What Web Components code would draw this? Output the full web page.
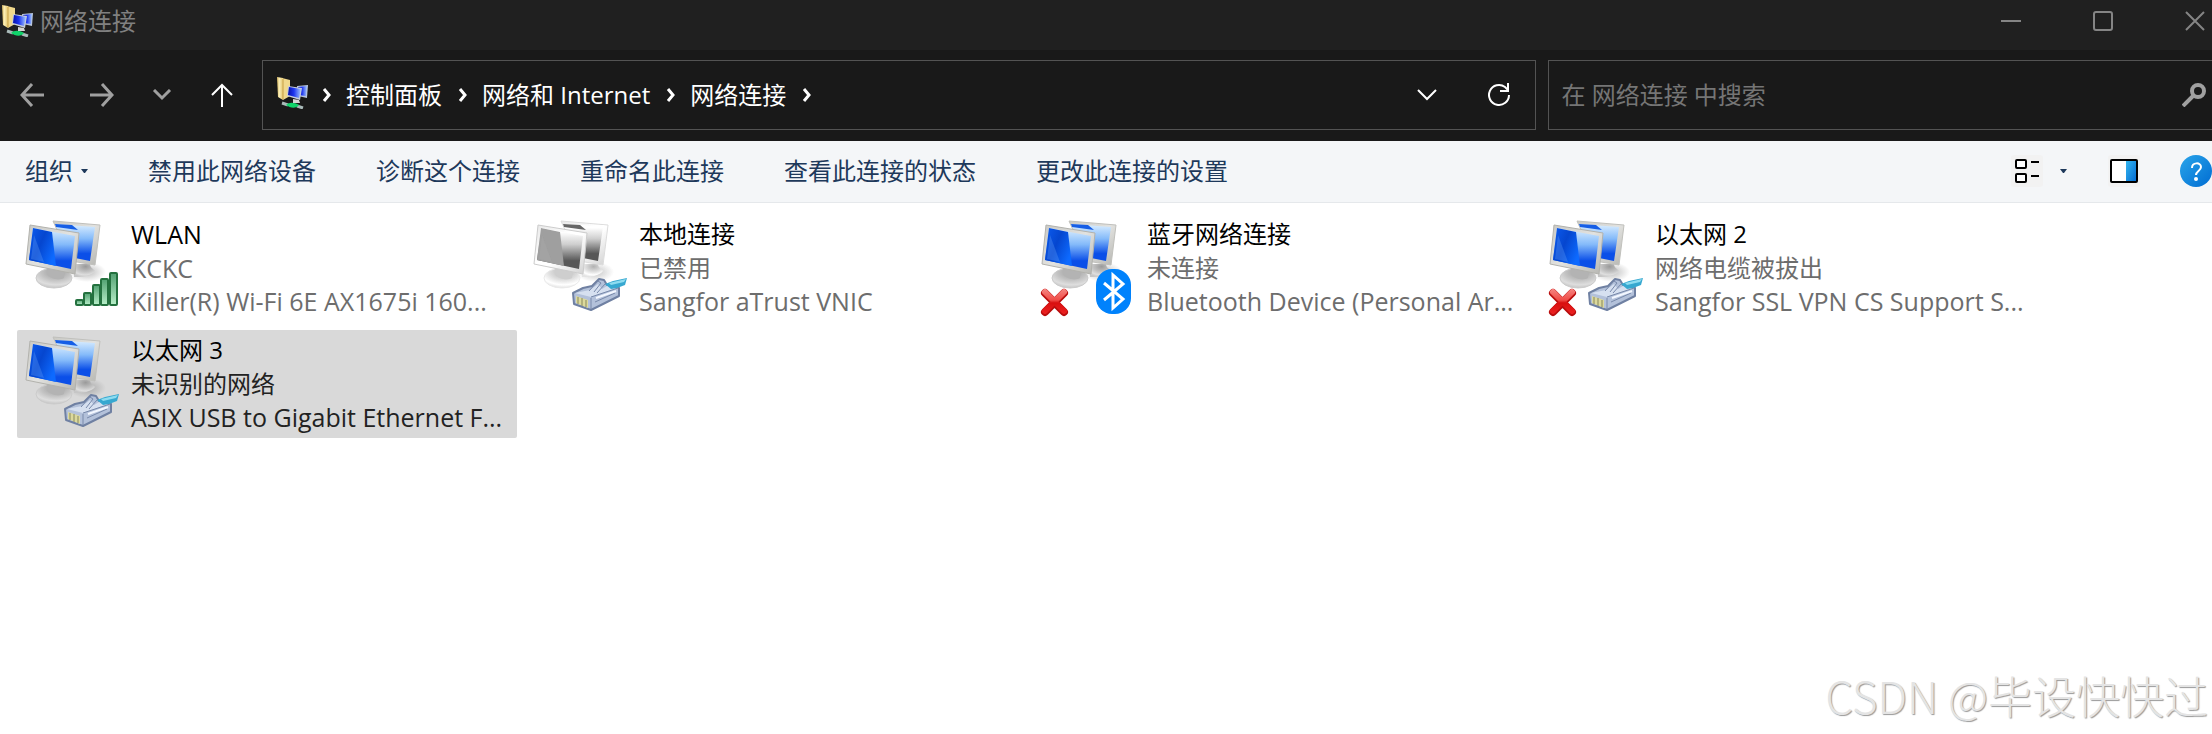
<!DOCTYPE html>
<html lang="zh-CN">
<head>
<meta charset="utf-8">
<title>网络连接</title>
<style>
  html, body { margin: 0; height: 100%; }
  body { background: #fff; font-family: "Open Sans", "Noto Sans CJK SC", sans-serif; font-size: 24px; line-height: 34px; overflow: hidden; }
</style>
</head>
<body>
<network-window></network-window>
<script>
const define = (name, html, setup) => customElements.define(name, class extends HTMLElement {
  connectedCallback() {
    if (this.shadowRoot) return;
    const t = document.createElement('template');
    t.innerHTML = html;
    this.attachShadow({ mode: 'open' }).append(t.content.cloneNode(true));
    if (setup) setup(this, this.shadowRoot);
  }
});

const reset = `
  button { all: unset; box-sizing: border-box; display: flex; align-items: center; justify-content: center; cursor: pointer; }
  a { color: inherit; text-decoration: none; }
  svg { display: block; flex: none; }
`;

define('folder-icon', `
<style>:host { display: block; flex: none; width: 32px; height: 32px; } svg { display: block; }</style>
<svg width="32" height="32" viewBox="0 0 32 32" aria-hidden="true">
  <defs>
    <linearGradient id="f"><stop offset="0" stop-color="#d9b960"/><stop offset=".4" stop-color="#fbeeb6"/><stop offset="1" stop-color="#e3c56c"/></linearGradient>
    <linearGradient id="s"><stop offset="0" stop-color="#0712a8"/><stop offset=".45" stop-color="#1d35f0"/><stop offset="1" stop-color="#a4c8ff"/></linearGradient>
  </defs>
  <path d="M0 0l6 1v22l-5-3z" fill="url(#f)"/>
  <path d="M5 1l8 2v16l-7 4z" fill="#f1d98c"/>
  <path d="M6 2v20" stroke="#c79f45" stroke-width="1"/>
  <path d="M20 9l11-1-1 13-9-2z" fill="#b9c6dc"/>
  <path d="M21 10l9-1-1 10-8-1z" fill="url(#s)"/>
  <path d="M11 9l14 2-2 12-13-4z" fill="#c7cedb"/>
  <path d="M12 10l12 2-2 9-11-3z" fill="url(#s)"/>
  <path d="M16 22l6 1 1 3h-7z" fill="#d5d5d5"/>
  <path d="M5 26l6 2M20 29l6 2" stroke="#a9bab9" stroke-width="3"/>
  <path d="M9 28c3-3 8-3 13 0-3 4-9 3-13 0z" fill="#10d36a"/>
</svg>`);

define('title-bar', `
<style>${reset}
  :host { display: flex; align-items: center; height: 50px; padding: 0 0 8px 2px; box-sizing: border-box; background: #202020; color: #808080; }
  h1 { margin: 0 auto 0 6px; font-size: 24px; font-weight: 400; }
  div { display: flex; gap: 72px; margin-right: 7px; }
  button { width: 20px; height: 42px; }
</style>
<folder-icon></folder-icon><h1>网络连接</h1>
<div>
  <button aria-label="最小化"><svg width="20" height="20" fill="none" stroke="#858585" stroke-width="2"><path d="M0 10h20"/></svg></button>
  <button aria-label="最大化"><svg width="20" height="20" fill="none" stroke="#858585" stroke-width="2"><rect x="1" y="1" width="18" height="18" rx="2"/></svg></button>
  <button aria-label="关闭"><svg width="20" height="20" fill="none" stroke="#858585" stroke-width="2"><path d="M1 1l18 18M19 1L1 19"/></svg></button>
</div>`);

const sep = '<svg width="10" height="14" fill="none" stroke="#fff" stroke-width="3" aria-hidden="true"><path d="M2 1l5 6-5 6"/></svg>';
define('nav-bar', `
<style>${reset}
  :host { display: flex; align-items: center; height: 91px; box-sizing: border-box; padding: 10px 0 11px; background: #191919; color: #fff; }
  .history { display: flex; width: 262px; flex: none; box-sizing: border-box; padding-left: 20px; align-items: center; }
  .history button { height: 48px; }
  .history button:nth-child(1) { width: 24px; margin-right: 46px; }
  .history button:nth-child(2) { width: 24px; margin-right: 38px; }
  .history button:nth-child(3) { width: 20px; margin-right: 38px; }
  .history button:nth-child(4) { width: 24px; }
  nav, form { display: flex; align-items: center; height: 70px; box-sizing: border-box; border: 1px solid #535353; margin: 0; }
  nav { flex: 1; padding: 0 24px 0 14px; }
  folder-icon { margin: 0 13px 5px 0; }
  a { margin: 0 16px 0 14px; }
  .grow { flex: 1; }
  nav button { width: 24px; height: 48px; }
  nav button:last-child { margin-left: 48px; }
  form { width: 30%; flex: none; margin-left: 12px; border-right: 0; padding: 0 6px 0 12px; }
  input { all: unset; flex: 1; font: inherit; color: #fff; }
  input::placeholder { color: #757575; opacity: 1; }
</style>
<div class="history">
  <button aria-label="后退"><svg width="24" height="24" fill="none" stroke="#a0a0a0" stroke-width="3"><path d="M24 12H2M12 1L2 12l10 11"/></svg></button>
  <button aria-label="前进"><svg width="24" height="24" fill="none" stroke="#a0a0a0" stroke-width="3"><path d="M0 12h22M12 1l10 11-10 11"/></svg></button>
  <button aria-label="最近的位置"><svg width="20" height="12" fill="none" stroke="#a0a0a0" stroke-width="3"><path d="M2 1l8 8 8-8"/></svg></button>
  <button aria-label="上移"><svg width="24" height="24" fill="none" stroke="#fff" stroke-width="2"><path d="M12 24V2M2 12L12 2l10 10"/></svg></button>
</div>
<nav aria-label="地址">
  <folder-icon></folder-icon>${sep}<a href="#panel">控制面板</a>${sep}<a href="#internet">网络和 Internet</a>${sep}<a href="#connections">网络连接</a>${sep}
  <span class="grow"></span>
  <button aria-label="以前的位置"><svg width="20" height="12" fill="none" stroke="#fff" stroke-width="2"><path d="M1 1l9 9 9-9"/></svg></button>
  <button aria-label="刷新"><svg width="24" height="24" fill="none" stroke="#fff" stroke-width="2"><path d="M22 12A10 10 0 1 1 18 4l3 3M21 0v8h-8"/></svg></button>
</nav>
<form role="search">
  <input type="search" aria-label="搜索" placeholder="在 网络连接 中搜索">
  <button type="button" aria-label="搜索"><svg width="24" height="24" fill="none" stroke="#a0a0a0" stroke-width="4"><circle cx="16" cy="8" r="6"/><path d="M12 12L1 23"/></svg></button>
</form>`);

define('command-bar', `
<style>${reset}
  :host { display: flex; align-items: center; height: 62px; box-sizing: border-box; padding: 0 0 2px 25px; background: #f4f6f8; border-bottom: 1px solid #e5e8eb; color: #1e395b; }
  .commands { display: flex; gap: 60px; flex: 1; }
  .commands button { white-space: nowrap; }
  .commands button svg { margin-left: 8px; }
  .view { display: flex; align-items: center; }
  .view button { height: 32px; }
  .view button:nth-child(2) { margin: 0 41px 0 17px; }
  .view button:nth-child(3) { margin-right: 40px; }
</style>
<div class="commands">
  <button>组织<svg width="7" height="4"><path d="M0 0h7L4 4H3z" fill="#1e395b"/></svg></button>
  <button>禁用此网络设备</button><button>诊断这个连接</button><button>重命名此连接</button><button>查看此连接的状态</button><button>更改此连接的设置</button>
</div>
<div class="view">
  <button aria-label="更改视图"><svg width="32" height="32" fill="none" stroke="#000" stroke-width="2"><rect width="32" height="32" rx="3" fill="#f2f2f2" stroke="none"/><rect x="5" y="5" width="10" height="8" rx="1" fill="#fff"/><rect x="5" y="19" width="10" height="8" rx="1" fill="#fff"/><path d="M20 7h8M20 21h8"/></svg></button>
  <button aria-label="更多选项"><svg width="7" height="4"><path d="M0 0h7L4 4H3z" fill="#1e395b"/></svg></button>
  <button aria-label="预览窗格"><svg width="32" height="32"><defs><linearGradient id="p" x2="1" y2="1"><stop stop-color="#35b8f1"/><stop offset="1" stop-color="#0067d0"/></linearGradient></defs><rect width="32" height="32" rx="3" fill="#f2f2f2"/><rect x="3" y="5" width="26" height="22" fill="#fff"/><path d="M18 5h11v22H18z" fill="url(#p)"/><rect x="3" y="5" width="26" height="22" rx="1" fill="none" stroke="#000" stroke-width="2"/></svg></button>
  <button aria-label="帮助"><svg width="32" height="32"><defs><linearGradient id="h" x2="1" y2="1"><stop stop-color="#29a5ea"/><stop offset="1" stop-color="#006cd2"/></linearGradient></defs><circle cx="16" cy="16" r="16" fill="url(#h)"/><path d="M12 13c0-6 9-6 9-1 0 4-5 4-5 8" fill="none" stroke="#fff" stroke-width="2"/><circle cx="16" cy="24" r="2" fill="#fff"/></svg></button>
</div>`);

const badges = {
  signal: [[58,85],[66,78],[75,70],[83,64],[92,58]].map(([x, y]) => `<rect x="${x + 1}" y="${y + 1}" width="7" height="${90 - y}" rx="1" fill="url(#green)" stroke="#24713f" stroke-width="2"/>`).join(''),
  plug: `<path d="M48 79l10-5 9-2 7-7 5 1 3 5 10 1 2 2v8l-28 14-17-6z" fill="#b3c1da" stroke="#6f80a2" stroke-width="2" stroke-linejoin="round"/>
    <path d="M50 79l16 4 26-9-10-2-5 3-4-5-8 6z" fill="#d6e0f0"/><path d="M66 84v11M66 83l27-9M70 88l20-9M64 77l9-10 3 2-7 9M80 70l-8 9" fill="none" stroke="#7889aa" stroke-width="1"/>
    <path d="M71 84l20-7" stroke="#f3f7ff" stroke-width="2"/>
    <path d="M51 82l12 4v8l-12-5z" fill="#dcd99c"/><path d="M53 83v7M57 84v8M61 86v7" stroke="#87885f" stroke-width="1"/>
    <path d="M80 70l8-3 14-3-2 7-8 3-6 1z" fill="#37a8d0"/><path d="M84 69l17-4-2 3-13 3z" fill="#8edcf0"/>`,
  bluetooth: `<rect x="63" y="55" width="35" height="45" rx="16" fill="#0082fc"/><path d="M71 69l19 16-10 9V61l10 9-19 16" fill="none" stroke="#fff" stroke-width="3"/>`,
  error: `<path d="M12 79l19 19M31 79L12 98" stroke="#b90d0d" stroke-width="8" stroke-linecap="round"/><path d="M12 78l19 19M31 78L12 97" stroke="url(#red)" stroke-width="6" stroke-linecap="round"/>`
};

define('connection-icon', `
<style>:host { display: block; flex: none; width: 104px; height: 108px; } svg { display: block; } :host([disabled]) .pc { filter: grayscale(1) brightness(1.15); } :host([disabled]) .tint { fill: #8a8a8a; }</style>
<svg width="104" height="108" viewBox="0 0 104 108" aria-hidden="true">
  <defs>
    <linearGradient id="frame" x2="1" y2="1"><stop stop-color="#c9c9c5"/><stop offset=".5" stop-color="#e2e2df"/><stop offset="1" stop-color="#b5b5b1"/></linearGradient>
    <linearGradient id="dark" x2="1" y2=".6"><stop stop-color="#0c5cf0"/><stop offset=".5" stop-color="#0546cf"/><stop offset="1" stop-color="#0d6aff"/></linearGradient>
    <linearGradient id="light" x2="0" y2="1"><stop stop-color="#dcefff"/><stop offset=".4" stop-color="#84bafa"/><stop offset=".8" stop-color="#0b4fe8"/></linearGradient>
    <radialGradient id="base" cx=".55" cy=".2" r=".8"><stop stop-color="#9a9a9a"/><stop offset=".5" stop-color="#c2c2c2"/><stop offset=".8" stop-color="#dedede"/><stop offset="1" stop-color="#c6c6c6"/></radialGradient>
    <radialGradient id="shade"><stop stop-color="#777" stop-opacity=".5"/><stop offset="1" stop-color="#777" stop-opacity="0"/></radialGradient>
    <linearGradient id="green" x2="0" y2="1"><stop stop-color="#52a172"/><stop offset="1" stop-color="#b8efc9"/></linearGradient>
    <linearGradient id="red" gradientUnits="userSpaceOnUse" x1="0" y1="74" x2="0" y2="101"><stop stop-color="#f58a86"/><stop offset=".45" stop-color="#f04a45"/><stop offset=".55" stop-color="#d80f0f"/><stop offset="1" stop-color="#ee2222"/></linearGradient>
  </defs>
  <g class="pc">
    <ellipse cx="70" cy="58" rx="19" ry="10" fill="url(#shade)"/>
    <path d="M57 50h16c0 4 4 5 5 7-4 5-12 6-21 6z" fill="url(#base)"/>
    <path d="M36 7l47 4-5 40-24-4z" fill="url(#frame)" stroke="#c0c0bc"/>
    <path d="M38 10l40 3-5 34-20-4z" fill="url(#light)"/>
    <path d="M38 10l17 1 6 5-22-3z" fill="#165ee6"/>
    <ellipse cx="37" cy="64" rx="18" ry="10" fill="url(#base)" stroke="#cbcbcb"/>
    <path d="M30 54l18 4-1 6c-6 3-12 1-17-3z" fill="#b3b3b3"/>
    <path d="M13 11l49 8-4 41-49-10z" fill="url(#frame)" stroke="#b2b2ad" stroke-linejoin="round"/>
    <path d="M16 14l42 8-4 33-42-9z" fill="url(#light)"/>
    <path class="tint" d="M16 14l19 4 4 34-27-6z" fill="url(#dark)"/>
    <path d="M17 21l10 27-13-3z" fill="#5e9cf5" opacity=".35"/>
  </g>
  <g id="badges"></g>
</svg>`, (el, root) => {
  root.getElementById('badges').innerHTML = (el.getAttribute('badges') || '').split(' ').map(b => badges[b] || '').join('');
});

define('connection-tile', `
<style>${reset}
  :host { display: block; color: #6d6d6d; min-width: 0; }
  button { width: 100%; height: 108px; justify-content: flex-start; border-radius: 2px; white-space: nowrap; }
  :host([selected]) button { background: #d9d9d9; color: #222; }
  .text { display: grid; margin-left: 10px; padding-bottom: 2px; grid-template-rows: 36px 32px 34px; align-items: center; }
  .name { color: #000; }
  .device, :host([latin]) .text { font-size: 25px; }
</style>
<button><connection-icon></connection-icon><span class="text"><span class="name"><slot name="name"></slot></span><span><slot name="status"></slot></span><span class="device"><slot name="device"></slot></span></span></button>`,
(el, root) => {
  const icon = root.querySelector('connection-icon');
  const fresh = document.createElement('connection-icon');
  fresh.setAttribute('badges', el.getAttribute('badges'));
  fresh.toggleAttribute('disabled', el.hasAttribute('disabled'));
  icon.replaceWith(fresh);
});

const tile = (attrs, name, status, device) => `<connection-tile ${attrs}><span slot="name">${name}</span><span slot="status">${status}</span><span slot="device">${device}</span></connection-tile>`;
define('connection-list', `
<style>:host { display: grid; grid-template-columns: repeat(auto-fill, 500px); gap: 8px; padding: 11px 17px; }</style>
${tile('badges="signal" latin', 'WLAN', 'KCKC', 'Killer(R) Wi-Fi 6E AX1675i 160...')}
${tile('badges="plug" disabled', '本地连接', '已禁用', 'Sangfor aTrust VNIC')}
${tile('badges="bluetooth error"', '蓝牙网络连接', '未连接', 'Bluetooth Device (Personal Ar...')}
${tile('badges="plug error"', '以太网 2', '网络电缆被拔出', 'Sangfor SSL VPN CS Support S...')}
${tile('badges="plug" selected', '以太网 3', '未识别的网络', 'ASIX USB to Gigabit Ethernet F...')}`);

define('network-window', `
<style>
  :host { display: flex; flex-direction: column; min-height: 100vh; position: relative; }
  .mark { position: absolute; right: 4px; bottom: 9px; font: 300 44px/60px "Noto Sans CJK SC", sans-serif; color: #e4e4e4; text-shadow: 1px 1px 1px #999; }
</style>
<title-bar></title-bar><nav-bar></nav-bar><command-bar></command-bar><connection-list></connection-list>
<div class="mark">CSDN @毕设快快过</div>`);
</script>
</body>
</html>
